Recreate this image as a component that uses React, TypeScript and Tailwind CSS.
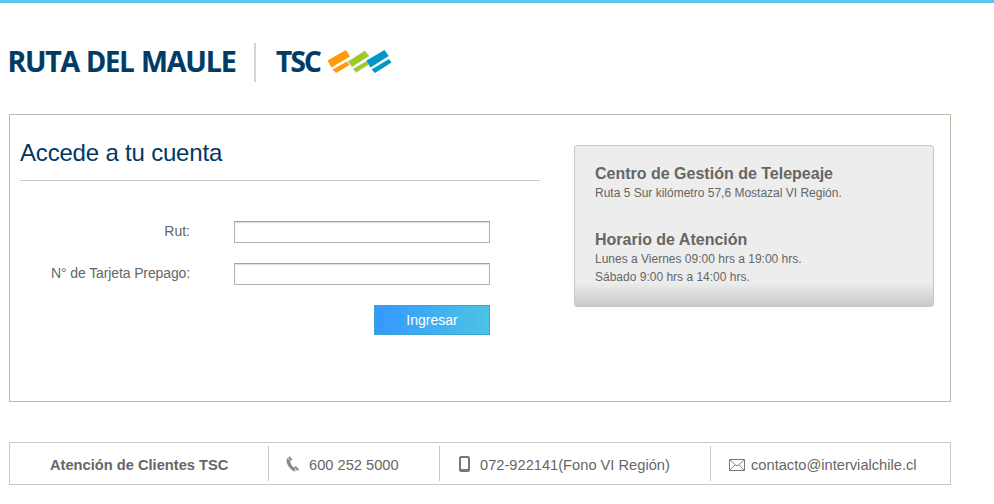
import React from "react";

function Logo() {
  return (
    <svg width="392" height="42" viewBox="0 42 392 42" className="block" role="img" aria-label="Ruta del Maule TSC">
      <g fill="#003c66" stroke="#003c66" strokeWidth=".2" fontFamily="'Open Sans', sans-serif" fontWeight="700" fontSize="29" letterSpacing="-1.2">
        <text x="7.500" y="72" textLength="71.500" lengthAdjust="spacingAndGlyphs">RUTA</text>
        <text x="86" y="72" textLength="47.500" lengthAdjust="spacingAndGlyphs">DEL</text>
        <text x="141" y="72" textLength="94.500" lengthAdjust="spacingAndGlyphs">MAULE</text>
        <text x="276" y="72" fontSize="28.5" textLength="44" lengthAdjust="spacingAndGlyphs" letterSpacing="-1.8">TSC</text>
      </g>
      <path d="M254 43h2v39h-2z" fill="#d3d3d3" />
      <path d="M327.500 60.500L346 50L350 56.500L331.500 67.500Z" fill="#ff9a0a" />
      <path d="M332.500 69.500L347 61.500L349.500 65L336 73Z" fill="#ff9a0a" />
      <path d="M348 61.500L365 50.800L369 56L352 67Z" fill="#9acb1d" stroke="#d0d3c9" strokeWidth=".8" />
      <path d="M353 69L367.500 60.500L369.500 64L356 72.500Z" fill="#9acb1d" stroke="#d0d3c9" strokeWidth=".8" />
      <path d="M366.500 60.500L384.500 50L388.800 56L370.500 67.500Z" fill="#0097cb" />
      <path d="M371.500 69.500L389 59L391.500 62.500L375 73Z" fill="#0097cb" />
    </svg>
  );
}

function PhoneIcon() {
  return (
    <svg width="14" height="16" viewBox="0 0 14 16" className="block shrink-0">
      <path d="M1.600 1.900C-.4 4 .5 8.500 4.200 12.200C5.800 14 7.500 15.300 9.500 15.600L8.500 11.800C6.200 10.800 4.400 8 4.100 5Z" fill="#888" />
      <path d="M3 .9L5.400 4.300M9 10.700L12.200 14.300" stroke="#888" strokeWidth="2.100" />
    </svg>
  );
}

function MobileIcon() {
  return (
    <svg width="11" height="16" viewBox="0 0 11 16" className="block shrink-0">
      <path d="M1.500 0h8L11 1.500v13L9.500 16h-8L0 14.500v-13zM2 2v11h7V2z" fill="#777" fillRule="evenodd" />
    </svg>
  );
}

function MailIcon() {
  return (
    <svg width="16" height="12" viewBox="0 0 16 12" className="block shrink-0" fill="none" stroke="#777">
      <path d="M.5.5h15v11H.5z" />
      <path d="M1 1l6 5.500h2L15 1M1 11l5-5M15 11l-5-5" strokeWidth=".9" />
    </svg>
  );
}

function Field({ label, spacing }: { label: string; spacing: string }) {
  return (
    <label className="flex h-[22px] items-center">
      <span className={`w-[170px] pb-0.5 text-right text-sm leading-5 whitespace-nowrap ${spacing}`}>{label}</span>
      <input className="ml-[44px] h-[22px] w-[256px] border border-[#b3b3b3] border-t-[#a0a0a0] bg-white px-1 text-sm shadow-[inset_0_1px_1px_#ddd] outline-none" />
    </label>
  );
}

export default function App() {
  return (
    <div className="h-[504px] w-[994px] overflow-hidden border-t-[3px] border-[#5bc5e8] bg-white font-['Liberation_Sans',Arial,sans-serif] text-[#666]">
      <header className="h-[111px] pt-[39px]">
        <Logo />
      </header>
      <main className="ml-[9px] flex h-[288px] w-[942px] border border-[#bbbaaa]">
        <section className="ml-[10px] w-[520px]">
          <h1 className="h-[66px] border-b border-[#c8c8c8] pt-[22px] text-2xl leading-8 tracking-[-.19px] text-[#003863]">Accede a tu cuenta</h1>
          <form className="pt-[40px]" onSubmit={(e) => e.preventDefault()}>
            <Field label="Rut:" spacing="tracking-normal" />
            <div className="h-5" />
            <Field label="N° de Tarjeta Prepago:" spacing="tracking-[-.12px]" />
            <button className="mt-5 ml-[354px] block h-[30px] w-[116px] border border-[#3ba4cc] bg-linear-to-r/srgb from-[#3399ff] to-[#4dc3e5] text-sm leading-7 text-white">Ingresar</button>
          </form>
        </section>
        <aside className="mt-[30px] ml-[34px] h-[162px] w-[360px] rounded-[3px] border border-[#c8c8c8] bg-linear-to-b/srgb from-[#ededed] from-[85%] to-[#c9c9c9] px-5 pt-[18px] text-xs leading-[18px]">
          <h2 className="text-base leading-5 font-bold">Centro de Gestión de Telepeaje</h2>
          <p>Ruta 5 Sur kilómetro 57,6 Mostazal VI Región.</p>
          <h2 className="mt-7 text-base leading-5 font-bold">Horario de Atención</h2>
          <p>Lunes a Viernes 09:00 hrs a 19:00 hrs.</p>
          <p>Sábado 9:00 hrs a 14:00 hrs.</p>
        </aside>
      </main>
      <footer className="mt-10 ml-[9px] flex h-[43px] w-[942px] items-center border border-[#c8c8c8] text-[14.67px] leading-5 whitespace-nowrap">
        <div className="h-[35px] w-[259px] border-r border-[#c8c8c8] pt-[9px] pl-10 leading-5 font-bold">Atención de Clientes TSC</div>
        <div className="flex h-[35px] w-[171px] items-center border-r border-[#c8c8c8] pt-px pl-[17px]">
          <PhoneIcon /><span className="ml-[9px] pt-0.5">600 252 5000</span>
        </div>
        <div className="flex h-[35px] w-[271px] items-center border-r border-[#c8c8c8] pt-px pl-[19px]">
          <MobileIcon /><span className="ml-[10px] pt-0.5">072-922141(Fono VI Región)</span>
        </div>
        <div className="flex h-[35px] items-center pt-0.5 pl-[18px]">
          <MailIcon /><span className="ml-[6px] pt-px">contacto@intervialchile.cl</span>
        </div>
      </footer>
    </div>
  );
}
